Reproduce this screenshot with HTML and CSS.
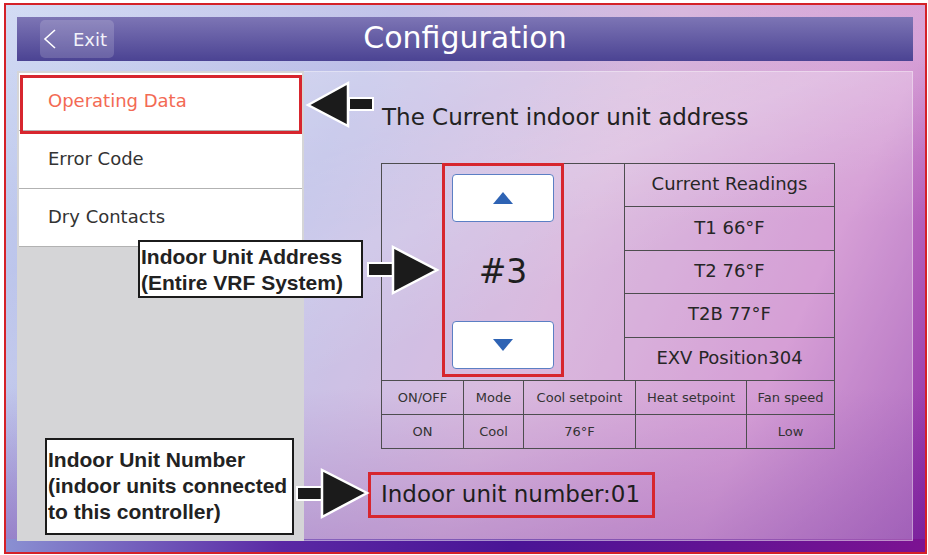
FILE: index.html
```html
<!DOCTYPE html>
<html lang="en">
<head>
    <meta charset="UTF-8">
    <meta name="viewport" content="width=device-width, initial-scale=1.0">
    <title>Configuration</title>
    <link rel="stylesheet" href="styles.css">
</head>
<body>
<div class="page">
    <div class="frame">
        <div class="screen">
            <header class="titlebar">
                <button class="exit">
                    <svg width="14" height="20" viewBox="0 0 14 20"><path d="M12 1 L2 10 L12 19" fill="none" stroke="#fff" stroke-width="1.6"/></svg>
                    <span>Exit</span>
                </button>
                <h1>Configuration</h1>
            </header>
            <div class="panel">
                <nav class="menu">
                    <div class="item active">Operating Data</div>
                    <div class="item">Error Code</div>
                    <div class="item">Dry Contacts</div>
                </nav>
                <main class="data">
                    <p class="heading">The Current indoor unit address</p>
                    <div class="unit-table">
                        <div class="top">
                            <div class="address">
                                <div class="picker">
                                    <button class="step"><span class="tri up"></span></button>
                                    <div class="num">#3</div>
                                    <button class="step"><span class="tri down"></span></button>
                                </div>
                            </div>
                            <div class="readings">
                                <div class="row">Current Readings</div>
                                <div class="row">T1 66°F</div>
                                <div class="row">T2 76°F</div>
                                <div class="row">T2B 77°F</div>
                                <div class="row">EXV Position304</div>
                            </div>
                        </div>
                        <div class="status">
                            <div class="cell">ON/OFF</div>
                            <div class="cell">Mode</div>
                            <div class="cell">Cool setpoint</div>
                            <div class="cell">Heat setpoint</div>
                            <div class="cell">Fan speed</div>
                            <div class="cell">ON</div>
                            <div class="cell">Cool</div>
                            <div class="cell">76°F</div>
                            <div class="cell"></div>
                            <div class="cell">Low</div>
                        </div>
                    </div>
                    <div class="unit-number">Indoor unit number:01</div>
                </main>
            </div>
        </div>
    </div>

    <!-- annotations -->
    <div class="mark mark-op"></div>
    <div class="callout callout-address">Indoor Unit Address<br>(Entire VRF System)</div>
    <div class="callout callout-number">Indoor Unit Number<br>(indoor units connected<br>to this controller)</div>

    <svg class="arrow arrow-left" width="74" height="52" viewBox="0 0 74 52">
        <rect x="45" y="20" width="24" height="12" fill="#1b1b1b" stroke="#fff" stroke-width="2"/>
        <polygon points="4,27 44,5 44,48" fill="#1b1b1b" stroke="#fff" stroke-width="2.5"/>
    </svg>
    <svg class="arrow arrow-address" width="78" height="54" viewBox="0 0 78 54">
        <rect x="4" y="20" width="26" height="13" fill="#1b1b1b" stroke="#fff" stroke-width="2"/>
        <polygon points="29,4 29,50 73,27" fill="#1b1b1b" stroke="#fff" stroke-width="2.5"/>
    </svg>
    <svg class="arrow arrow-number" width="78" height="55" viewBox="0 0 78 55">
        <rect x="4" y="21" width="26" height="13" fill="#1b1b1b" stroke="#fff" stroke-width="2"/>
        <polygon points="29,4 29,51 74,27" fill="#1b1b1b" stroke="#fff" stroke-width="2.5"/>
    </svg>
</div>
</body>
</html>
```

FILE: styles.css
```css
*{
    box-sizing: border-box;
}
body{
    margin: 0;
    font-family: "DejaVu Sans", sans-serif;
    background: #fff;
}
.page{
    position: relative;
    width: 928px;
    height: 555px;
    overflow: hidden;
}
.frame{
    margin: 3px 0 0 4px;
    width: 923px;
    height: 551px;
    border: 2px solid #d42128;
}
.screen{
    width: 100%;
    height: 100%;
    padding: 12px 12px 0 11px;
    background:
        linear-gradient(to right, #8a90d2 0%, #5a28a4 30%, #4a1496 55%, #7c1292 100%) bottom / 100% 13px no-repeat,
        linear-gradient(160deg, rgba(255,255,255,0) 30%, rgba(255,255,255,0.12) 42%, rgba(255,255,255,0) 55%),
        linear-gradient(to bottom, rgba(255,255,255,0.25) 0%, rgba(255,255,255,0) 40%, rgba(70,10,140,0) 70%, rgba(90,10,140,0.35) 100%),
        linear-gradient(115deg, #c4d0f0 0%, #aeb0e2 33%, #cca0d2 58%, #c67ac6 80%, #8a2aa4 100%);
}

/* title bar */
.titlebar{
    display: grid;
    grid-template-columns: 1fr auto 1fr;
    align-items: center;
    height: 44px;
    background: linear-gradient(#7d75b5, #4b4393);
}
.exit{
    justify-self: start;
    display: flex;
    align-items: center;
    gap: 16px;
    margin-left: 23px;
    width: 74px;
    height: 38px;
    padding: 0 0 0 3px;
    border: none;
    border-radius: 5px;
    background: rgba(255,255,255,0.16);
    color: #f2f2fa;
    font-family: "DejaVu Sans", sans-serif;
    font-size: 18px;
}
.titlebar h1{
    margin: -3px 0 0;
    color: #fff;
    font-weight: normal;
    font-size: 30px;
}

/* main panel */
.panel{
    display: flex;
    margin-top: 10px;
    height: 470px;
    background: rgba(255,255,255,0.28);
    border: 1px solid rgba(255,255,255,0.35);
}
.menu{
    width: 287px;
    margin: -1px 0 -1px -1px;
    padding: 2px;
    background: #d5d5d7;
}
.item{
    height: 58px;
    padding: 17px 0 0 29px;
    background: #fff;
    border-bottom: 1px solid #b2b2b2;
    color: #333;
    font-size: 18px;
}
.item.active{
    color: #f36a54;
}
.data{
    flex: 1;
    padding-left: 64px;
}
.heading{
    margin: 31px 0 0 14px;
    line-height: 28px;
    font-size: 23px;
    color: #222;
}

/* readings table */
.unit-table{
    width: 454px;
    margin: 32px 0 0 13px;
    border: 1px solid #4d4d4f;
    color: #262626;
}
.top{
    display: flex;
    height: 217px;
    border-bottom: 1px solid #4d4d4f;
}
.address{
    width: 243px;
    border-right: 1px solid #4d4d4f;
}
.picker{
    display: flex;
    flex-direction: column;
    justify-content: space-between;
    align-items: center;
    width: 122px;
    height: 214px;
    margin: -1px 0 0 60px;
    padding: 8px 0 5px;
    border: 3px solid #d7262e;
}
.step{
    display: flex;
    align-items: center;
    justify-content: center;
    width: 102px;
    height: 48px;
    background: #fff;
    border: 1px solid #5b7fc4;
    border-radius: 4px;
}
.tri{
    width: 0;
    height: 0;
    border-left: 10px solid transparent;
    border-right: 10px solid transparent;
}
.tri.up{
    border-bottom: 12px solid #2e63b4;
}
.tri.down{
    border-top: 12px solid #2e63b4;
}
.num{
    font-size: 33px;
    color: #1e1e1e;
}
.readings{
    flex: 1;
    display: flex;
    flex-direction: column;
}
.row{
    flex: 1;
    display: flex;
    align-items: center;
    justify-content: center;
    padding-bottom: 3px;
    border-bottom: 1px solid #4d4d4f;
    font-size: 18px;
}
.row:last-child{
    border-bottom: none;
}
.status{
    display: grid;
    grid-template-columns: 82px 60px 112px 111px 1fr;
    grid-template-rows: 34px 33px;
}
.cell{
    display: flex;
    align-items: center;
    justify-content: center;
    border-right: 1px solid #4d4d4f;
    font-size: 13px;
    color: #333;
}
.cell:nth-child(5n){
    border-right: none;
}
.cell:nth-child(-n+5){
    border-bottom: 1px solid #4d4d4f;
}
.unit-number{
    width: 287px;
    height: 46px;
    margin-top: 23px;
    padding: 6px 0 0 10px;
    border: 3px solid #d7262e;
    font-size: 23px;
    color: #1e1e1e;
}

/* annotations over the screenshot */
.mark{
    position: absolute;
    border: 3px solid #d7262e;
}
.mark-op{
    left: 20px;
    top: 75px;
    width: 282px;
    height: 59px;
}
.callout{
    position: absolute;
    background: #fff;
    border: 2.5px solid #1b1b1b;
    font-family: "Liberation Sans", Arial, sans-serif;
    font-weight: bold;
    font-size: 21px;
    line-height: 26px;
    color: #222;
    padding-left: 1px;
}
.callout-address{
    left: 138px;
    top: 240px;
    width: 225px;
    height: 58px;
    padding-top: 2px;
}
.callout-number{
    left: 45px;
    top: 438px;
    width: 249px;
    height: 97px;
    padding-top: 7px;
}
.arrow{
    position: absolute;
}
.arrow-left{
    left: 304px;
    top: 78px;
}
.arrow-address{
    left: 364px;
    top: 243px;
}
.arrow-number{
    left: 293px;
    top: 466px;
}
```
